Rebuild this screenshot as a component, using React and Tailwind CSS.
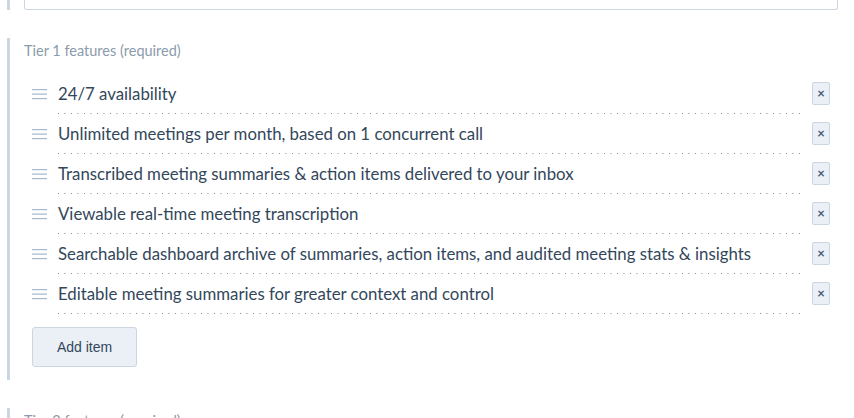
const items = [
  '24/7 availability',
  'Unlimited meetings per month, based on 1 concurrent call',
  'Transcribed meeting summaries & action items delivered to your inbox',
  'Viewable real-time meeting transcription',
  'Searchable dashboard archive of summaries, action items, and audited meeting stats & insights',
  'Editable meeting summaries for greater context and control',
]

const DragHandle = () => (
  <svg width="16" height="12" viewBox="0 0 16 12" className="shrink-0">
    <rect x="0" y="1" width="15" height="1.2" fill="#a6b8ca" />
    <rect x="0" y="5.5" width="15" height="1.2" fill="#a6b8ca" />
    <rect x="0" y="10" width="15" height="1.2" fill="#a6b8ca" />
  </svg>
)

const FeatureRow = ({ text }) => (
  <div className="flex items-start h-10">
    <div className="w-[26px] h-[24px] flex items-center">
      <DragHandle />
    </div>
    <div className="flex-1">
      <div className="w-[742px] h-10 pt-[2px] text-[16.8px] leading-[20px] text-[#33475b] whitespace-nowrap bg-[linear-gradient(to_right,#7a8a99_1px,transparent_1px)] bg-[length:6.5px_1px] bg-repeat-x bg-[position:0_31px]">
        {text}
      </div>
    </div>
    <button className="mr-[8px] w-[18px] h-[23px] rounded-[2px] border border-[#cbd6e2] bg-[#eaf0f6] flex items-center justify-center text-[#425b76] text-[13px] leading-none font-bold">
      ×
    </button>
  </div>
)

export default function App() {
  return (
    <div className="w-[854px] h-[418px] overflow-hidden bg-white pl-[7px] pr-[16px]" style={{ fontFamily: 'Lato, "Noto Sans", sans-serif' }}>
      <div className="border-l-[3px] border-[#cbd6e2] pl-[14px] h-[10px]">
        <div className="h-[10px] border border-t-0 border-[#cbd6e2] rounded-b-[3px]" />
      </div>

      <div className="mt-[28px] border-l-[3px] border-[#cbd6e2] pl-[14px] pt-[4px] h-[342px]">
        <div className="text-[14.5px] leading-[18px] text-[#8b9bab]">Tier 1 features (required)</div>
        <div className="mt-[22px] pl-[8px]">
          {items.map((t) => (
            <FeatureRow key={t} text={t} />
          ))}
        </div>
        <button
          className="mt-[5px] ml-[8px] w-[105px] h-[40px] rounded-[3px] border border-[#cbd6e2] bg-[#eaf0f6] text-[14px] text-[#33475b]"
          style={{ fontFamily: '"Liberation Sans", Arial, sans-serif' }}
        >
          Add item
        </button>
      </div>

      <div className="mt-[28px] border-l-[3px] border-[#cbd6e2] pl-[14px] pt-[4px] h-[40px]">
        <div className="text-[14.5px] leading-[18px] text-[#8b9bab]">Tier 2 features (required)</div>
      </div>
    </div>
  )
}
